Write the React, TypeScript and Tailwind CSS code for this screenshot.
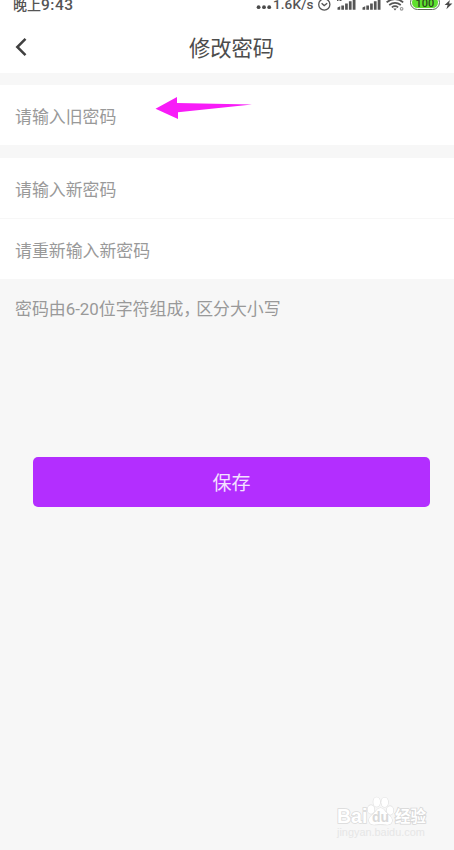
interface FieldProps {
  placeholder: string;
}

const SignalIcon = ({ label }: { label?: boolean }) => (
  <svg className="w-[19px] h-[10px] shrink-0" viewBox="0 0 19 10" fill="#555">
    {label && <path d="M0 0h1.5v1H0zM2.500 0h2v1h-2z" />}
    <path d="M0.500 7.500L3.200 6.300v3.400H0.500zM4.300 5.600h2.700v4.100H4.300zM8.100 3.500h2.700v6.200H8.100zM11.900 1.200h2.700v8.500h-2.700zM15.700 0h2.800v9.700h-2.800z" />
  </svg>
);

const StatusBar = () => (
  <div className="h-[22px] overflow-hidden flex items-start pl-[13px] text-[#555] font-medium">
    <div className="flex -mt-[4px] h-[18px] items-baseline leading-[18px] whitespace-nowrap">
      <span className="text-[14px]">晚上</span>
      <span className="text-[15.5px] tracking-[0.5px]">9:43</span>
    </div>
    <div className="ml-auto flex items-start w-[198px] shrink-0">
      <svg className="w-[17px] h-[10px] shrink-0" viewBox="0 0 17 10" fill="#4a4a4a">
        <circle cx="2.6" cy="7.2" r="1.9" />
        <circle cx="8" cy="7.2" r="1.9" />
        <circle cx="13.2" cy="7.2" r="1.9" />
      </svg>
      <span className="w-[44px] shrink-0 -mt-[5px] text-[13.5px] leading-[18px] tracking-[0.1px] whitespace-nowrap">1.6K/s</span>
      <svg className="w-[14px] h-[12px] shrink-0" viewBox="0 0 14 12" fill="none" stroke="#555" strokeWidth="1.3">
        <circle cx="7.3" cy="4.500" r="5.600" />
        <path d="M4.600 3.200l2.600 2.400 3-2.400" />
      </svg>
      <div className="ml-[6px]">
        <SignalIcon label />
      </div>
      <div className="ml-[6px]">
        <SignalIcon />
      </div>
      <svg className="ml-[5px] w-[19px] h-[12px] shrink-0" viewBox="0 0 19 12" fill="none" stroke="#555" strokeWidth="1.7">
        <path d="M0.600 2.300Q9 -4 17.200 2.300M3.200 5Q9 0.600 14.800 5M5.800 7.400Q9 5 12.200 7.400" />
        <path d="M7.300 8.400h3.400L9 10.400z" fill="#555" stroke="none" />
        <circle cx="15.600" cy="8.800" r="1.300" stroke="#999" strokeWidth="1.200" />
      </svg>
      <div className="ml-[5px] -mt-[5px] w-[30px] h-[15px] shrink-0 rounded-full border border-[#5b6b55] bg-white p-px">
        <div className="h-full pt-[1px] rounded-full bg-[#5fe02f] text-[#29481d] text-[11px] leading-[11px] font-medium text-center">100</div>
      </div>
      <svg className="ml-[4px] w-[9px] h-[10px] shrink-0" viewBox="0 0 9 10" fill="#4a4a4a">
        <path d="M6 0L0.600 5h3L2.400 9.200 8.400 3.600H5z" />
      </svg>
    </div>
  </div>
);

const Header = () => (
  <header className="h-[51px] flex items-center bg-white">
    <svg className="ml-[14px] -mt-px w-[14px] h-[22px]" viewBox="0 0 14 22" fill="none" stroke="#404040" strokeWidth="2.500">
      <path d="M11.500 2.800L3.300 11l8.200 8.200" />
    </svg>
    <h1 className="flex-1 pt-[2px] pl-[7px] pr-[26px] text-center text-[21.3px] leading-[30px] text-[#4c4c4c]">修改密码</h1>
  </header>
);

const Field = ({ placeholder }: FieldProps) => (
  <div className="h-[60px] flex items-center bg-white px-[15px] pt-[5px] text-[16.9px] text-[#999]">{placeholder}</div>
);

const PawLogo = () => (
  <svg className="w-[27px] h-[30px]" viewBox="0 0 27 30" fill="#fff" stroke="#dedede" strokeWidth="1.200">
    <ellipse cx="4" cy="13.500" rx="3.300" ry="4.300" />
    <ellipse cx="9.700" cy="6" rx="3.400" ry="4.700" />
    <ellipse cx="17.700" cy="6.300" rx="3.400" ry="4.700" />
    <ellipse cx="23" cy="14.500" rx="3.300" ry="4.300" />
    <path d="M13.500 12c-3 0-4 3-6.500 5.200C4 20 1.500 21.500 2 25c.6 3.500 4 4 7 3.600 3-.4 6-.4 9 0s6.500 0 7-3.600c.4-3.500-2-5-5-7.800C17.500 15 16.500 12 13.500 12z" />
  </svg>
);

const Watermark = () => (
  <div className="absolute left-[337px] top-[796px] w-[92px] font-['Liberation_Sans','Noto_Sans_CJK_SC',sans-serif]">
    <div className="flex items-center h-[30px] whitespace-nowrap text-white [paint-order:stroke_fill]">
      <span className="w-[30px] shrink-0 mt-[10px] text-[19.5px] leading-[20px] font-bold [-webkit-text-stroke:1.6px_#dadada]">Bai</span>
      <div className="relative shrink-0">
        <PawLogo />
        <span className="absolute left-[5px] top-[14px] text-[14px] leading-[14px] font-bold text-[#d9d9d9]">du</span>
      </div>
      <span className="mt-[11px] ml-[1px] text-[15.500px] leading-[18px] font-bold [-webkit-text-stroke:1.6px_#d6d6d6]">经验</span>
    </div>
    <div className="text-[10.900px] leading-[12px] whitespace-nowrap text-[#e6e6e6]">jingyan.baidu.com</div>
  </div>
);

const App = () => {
  return (
    <div className="relative w-[454px] h-[850px] overflow-hidden bg-[#f7f7f7] font-[Roboto,'Noto_Sans_CJK_SC',sans-serif]">
      <div className="bg-white">
        <StatusBar />
        <Header />
      </div>

      <div className="mt-[12px]">
        <Field placeholder="请输入旧密码" />
      </div>

      <div className="mt-[13px]">
        <Field placeholder="请输入新密码" />
        <div className="h-px bg-[#f7f7f7]" />
        <Field placeholder="请重新输入新密码" />
      </div>

      <p className="mt-[17px] px-[15px] text-[16.9px] leading-[26px] text-[#999]">
        密码由6-20位字符组成<span className="tracking-[-4px]">，</span>区分大小写
      </p>

      <div className="mt-[135px] pl-[33px] pr-[24px]">
        <button className="w-full h-[50px] pt-[5px] rounded-[5px] bg-[#b32eff] text-[19px] text-[#f3e2ff]">保存</button>
      </div>

      {/* pointer to the old password field */}
      <svg className="absolute left-[155px] top-[96px] w-[98px] h-[24px]" viewBox="0 0 98 24" fill="#f81cf8">
        <path d="M0.500 12.700L22 1v6l75 1.500L23 16.300V23z" />
      </svg>

      <Watermark />
    </div>
  );
};

export default App;
